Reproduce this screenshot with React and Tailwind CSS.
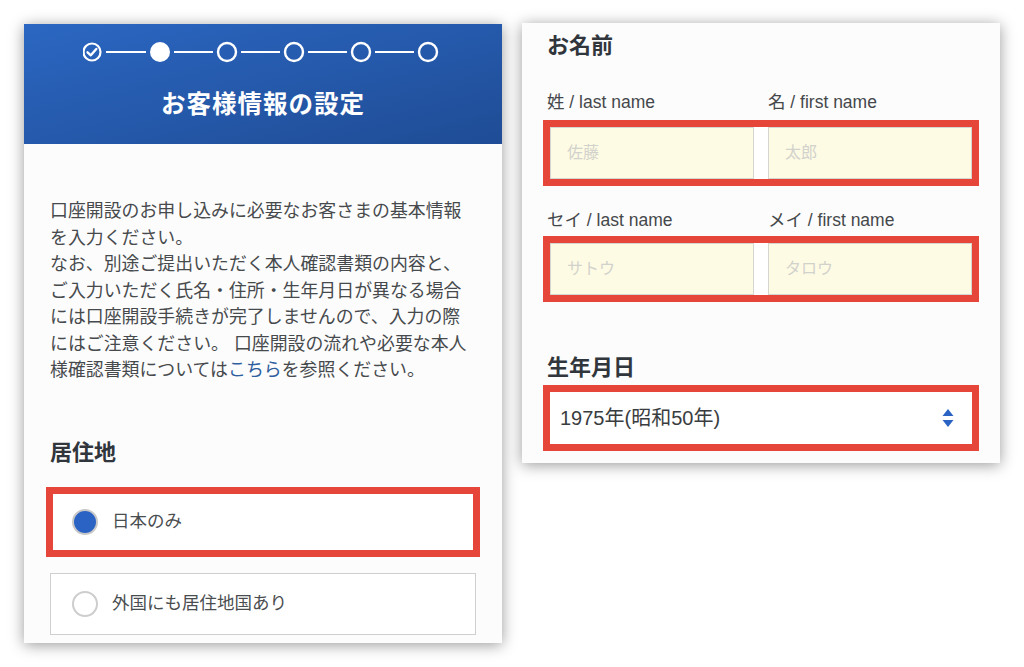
import React from "react";

const JP = { fontFamily: '"Liberation Sans", "Noto Sans CJK JP", sans-serif' };

function Stepper() {
  const cs = [9, 77, 144, 211, 278, 345];
  return (
    <svg width="360" height="24" viewBox="0 0 360 24" className="block">
      {cs.slice(0, -1).map((c, i) => (
        <line key={i} x1={c + 14} y1="12" x2={cs[i + 1] - 14} y2="12" stroke="white" strokeWidth="2" />
      ))}
      <circle cx={cs[0]} cy="12" r="8.5" fill="none" stroke="white" strokeWidth="2.2" />
      <path d="M4.5 12.3 L7.8 15.3 L13.3 9" fill="none" stroke="white" strokeWidth="2.4" strokeLinecap="round" strokeLinejoin="round" />
      <circle cx={cs[1]} cy="12" r="10" fill="white" />
      {cs.slice(2).map((c) => (
        <circle key={c} cx={c} cy="12" r="9" fill="none" stroke="white" strokeWidth="2.4" />
      ))}
    </svg>
  );
}

function Arrows() {
  return (
    <svg width="12" height="18" viewBox="0 0 12 18">
      <path d="M6 0 L11.5 7 L0.5 7 Z" fill="#2a63c4" />
      <path d="M6 18 L11.5 11 L0.5 11 Z" fill="#2a63c4" />
    </svg>
  );
}

export default function App() {
  return (
    <div className="w-[1024px] h-[667px] bg-white overflow-hidden flex items-start" style={JP}>
      {/* Left panel */}
      <div className="ml-[24px] mt-[24px] w-[478px] h-[619px] bg-[#fcfcfc] shadow-[0_2px_14px_rgba(0,0,0,0.4)] flex flex-col overflow-hidden">
        <div className="h-[120px] bg-gradient-to-br from-[#2b67c2] to-[#1f4c95] flex flex-col items-center">
          <div className="mt-[16px]">
            <Stepper />
          </div>
          <div className="mt-[23px] text-white text-[24.5px] leading-[36px] font-bold tracking-[1px]">お客様情報の設定</div>
        </div>
        <div className="px-[22px] pt-[54px] flex flex-col">
          <div className="pl-[4px] text-[17.9px] leading-[26.5px] text-[#474a4d] whitespace-nowrap">
            口座開設のお申し込みに必要なお客さまの基本情報<br />
            を入力ください。<br />
            なお、別途ご提出いただく本人確認書類の内容と、<br />
            ご入力いただく氏名・住所・生年月日が異なる場合<br />
            には口座開設手続きが完了しませんので、入力の際<br />
            にはご注意ください。 口座開設の流れや必要な本人<br />
            様確認書類については<span className="text-[#2e5e9e]">こちら</span>を参照ください。
          </div>
          <div className="pl-[4px] mt-[54px] text-[22px] leading-[30px] font-bold text-[#30363c]">居住地</div>
          <div className="mt-[19px] h-[70px] border-[7px] border-[#e6463a] bg-white flex items-center pl-[19px]">
            <div className="w-[26px] h-[26px] rounded-full border-2 border-[#c8c8c8] bg-[#2a63c4]" />
            <span className="ml-[14px] text-[17.5px] text-[#4a4d50]">日本のみ</span>
          </div>
          <div className="mt-[16px] mx-[4px] h-[62px] border border-[#cfcfcf] bg-white flex items-center pl-[21px]">
            <div className="w-[26px] h-[26px] rounded-full border-2 border-[#cdcdcd] bg-white" />
            <span className="ml-[14px] text-[17.5px] text-[#4a4d50]">外国にも居住地国あり</span>
          </div>
        </div>
      </div>

      {/* Right panel */}
      <div className="ml-[20px] mt-[23px] w-[478px] h-[440px] bg-[#fcfcfc] shadow-[0_2px_14px_rgba(0,0,0,0.4)] px-[21px] pt-[8px] flex flex-col">
        <div className="pl-[4px] text-[22px] leading-[30px] font-bold text-[#30363c]">お名前</div>
        <div className="mt-[29px] grid grid-cols-[225px_1fr] text-[17.5px] leading-[24px] text-[#45484b]">
          <div className="pl-[4px]">姓 / last name</div>
          <div>名 / first name</div>
        </div>
        <div className="mt-[6px] h-[66px] border-[7px] border-[#e6463a] bg-white grid grid-cols-2 gap-[14px]">
          <div className="bg-[#fefbe4] border border-[#d6d6d0] flex items-center pl-[16px] text-[16px] text-[#d2d2cc]">佐藤</div>
          <div className="bg-[#fefbe4] border border-[#d6d6d0] flex items-center pl-[16px] text-[16px] text-[#d2d2cc]">太郎</div>
        </div>
        <div className="mt-[22px] grid grid-cols-[225px_1fr] text-[17.5px] leading-[24px] text-[#45484b]">
          <div className="pl-[4px]">セイ / last name</div>
          <div>メイ / first name</div>
        </div>
        <div className="mt-[4px] h-[66px] border-[7px] border-[#e6463a] bg-white grid grid-cols-2 gap-[14px]">
          <div className="bg-[#fefbe4] border border-[#d6d6d0] flex items-center pl-[16px] text-[16px] text-[#d2d2cc]">サトウ</div>
          <div className="bg-[#fefbe4] border border-[#d6d6d0] flex items-center pl-[16px] text-[16px] text-[#d2d2cc]">タロウ</div>
        </div>
        <div className="pl-[4px] mt-[51px] text-[22px] leading-[30px] font-bold text-[#30363c]">生年月日</div>
        <div className="mt-[2px] h-[66px] border-[7px] border-[#e6463a] bg-white flex items-center justify-between pl-[10px] pr-[18px]">
          <span className="text-[20px] text-[#3a3d40]">1975年(昭和50年)</span>
          <Arrows />
        </div>
      </div>
    </div>
  );
}
